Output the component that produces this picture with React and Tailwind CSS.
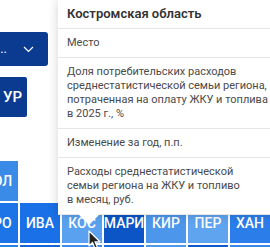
const ROW_TWO = [
  { code: 'ЯРО', color: 'bg-[#1c74e6]' },
  { code: 'ИВА', color: 'bg-[#1a70e6]' },
  { code: 'КОС', color: 'bg-[#5aa2ef]' },
  { code: 'МАРИ', color: 'bg-[#0b55c7]' },
  { code: 'КИР', color: 'bg-[#4c97ec]' },
  { code: 'ПЕР', color: 'bg-[#5ea4ef]' },
  { code: 'ХАН', color: 'bg-[#2b7eea]' },
];

const ROW_THREE = [
  'bg-[#2d7fe9]',
  'bg-[#1665d8]',
  'bg-[#3f8deb]',
  'bg-[#1c6ee2]',
  'bg-[#4e99ed]',
  'bg-[#0e5bcf]',
  'bg-[#3a89ea]',
];

// line breaks kept as in the tooltip
const ROWS = [
  ['Место'],
  [
    'Доля потребительских расходов',
    'среднестатистической семьи региона,',
    'потраченная на оплату ЖКУ и топлива',
    'в 2025 г., %',
  ],
  ['Изменение за год, п.п.'],
  ['Расходы среднестатистической', 'семьи региона на ЖКУ и топливо', 'в месяц, руб.'],
];

function Tile({ code, color }) {
  return (
    <div className={`flex h-10 w-10 items-center justify-center text-[14px] font-medium text-white ${color}`}>
      {code}
    </div>
  );
}

function Popover() {
  return (
    <div className="absolute left-[58px] top-0 w-[222px] bg-white shadow-[0_0_10px_rgba(0,0,0,0.18)]">
      <div className="flex h-[29px] items-center border-b border-[#e6e6e6] px-[9px] text-[13px] font-semibold text-[#333]">
        Костромская область
      </div>
      {ROWS.map((lines) => (
        <div
          key={lines[0]}
          className="border-b border-[#e6e6e6] px-[9px] py-[7px] text-[11px] leading-[14px] text-[#4a4a4a] last:border-b-0 last:pb-[3px]"
        >
          {lines.map((line) => (
            <div key={line} className="whitespace-nowrap">
              {line}
            </div>
          ))}
        </div>
      ))}
      <div className="absolute -bottom-[7px] left-[24px] h-[14px] w-[14px] rotate-45 bg-white" />
    </div>
  );
}

function Cursor() {
  return (
    <svg className="absolute left-[88px] top-[230px]" width="13" height="20" viewBox="0 0 13 20">
      <path
        d="M1 1 L1 16 L4.5 12.5 L7 18.5 L9.5 17.5 L7 11.8 L12 11.8 Z"
        fill="#222"
        stroke="#fff"
        strokeWidth="1.2"
        strokeLinejoin="round"
      />
    </svg>
  );
}

export default function App() {
  return (
    <div className="relative h-[247px] w-[270px] overflow-hidden bg-white font-['Roboto','Liberation_Sans',sans-serif]">
      <div className="-ml-[22px] flex flex-col pt-8">
        <button className="flex h-[34px] w-[70px] items-center justify-end gap-4 rounded-r-[3px] bg-[#0b3b90] pr-[14px] text-[13px] text-white">
          <span>...</span>
          <svg width="11" height="7" viewBox="0 0 11 7" fill="none">
            <path d="M1 1 L5.5 5.5 L10 1" stroke="#fff" strokeWidth="1.2" />
          </svg>
        </button>

        <div className="mt-[11px] flex h-10 w-[49px] items-center justify-end rounded-r-[2px] bg-[#0b3b90] pr-[5px] text-[15px] font-medium text-white">
          УР
        </div>

        <div className="mt-[44px] grid grid-cols-[repeat(7,40px)] gap-[2px]">
          <Tile code="ВОЛ" color="bg-[#3a8be8]" />
          <div className="col-span-6" />
          {ROW_TWO.map((tile) => (
            <Tile key={tile.code} {...tile} />
          ))}
          {ROW_THREE.map((color, idx) => (
            <div key={idx} className={`h-10 w-10 ${color}`} />
          ))}
        </div>
      </div>

      <Popover />
      <Cursor />
    </div>
  );
}
